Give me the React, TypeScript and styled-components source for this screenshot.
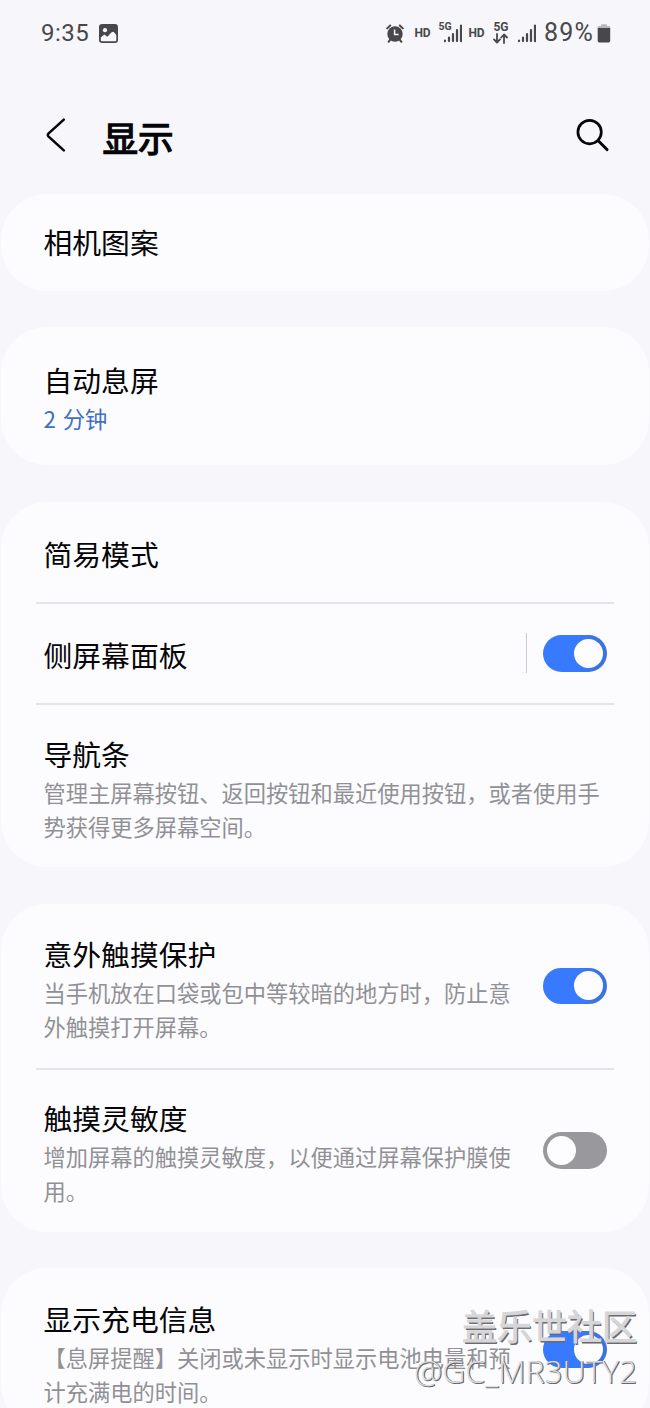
import React from 'react';
import styled, { createGlobalStyle } from 'styled-components';

const GlobalStyle = createGlobalStyle`
  * { box-sizing: border-box; }
  html, body { margin: 0; padding: 0; background: #f6f6fb; }
  body { height: 1408px; overflow: hidden; }
`;

const Screen = styled.main`
  position: relative;
  width: 650px;
  height: 1408px;
  overflow: hidden;
  background: #f6f6fb;
  color: #060608;
  font-family: Roboto, 'Noto Sans CJK SC', sans-serif;
`;

const StatusBar = styled.div`
  display: flex;
  justify-content: space-between;
  height: 66px;
  padding: 0 39px 0 41px;
  color: #48484a;
`;

const StatusGroup = styled.div`
  display: flex;
  align-items: center;
`;

const StatusText = styled.span<{ $spacing: number; $gap?: number; $size?: number }>`
  margin-left: ${(p) => p.$gap ?? 0}px;
  font-size: ${(p) => p.$size ?? 24}px;
  line-height: 28px;
  letter-spacing: ${(p) => p.$spacing}px;
`;

const StatusIcon = styled.svg<{ $gap: number }>`
  display: block;
  flex: none;
  margin-left: ${(p) => p.$gap}px;
`;

const HdLabel = styled.span<{ $gap: number }>`
  width: 17px;
  margin-left: ${(p) => p.$gap}px;
  font: 700 12px/14px Roboto, sans-serif;
  letter-spacing: -0.2px;
`;

const Header = styled.header`
  display: flex;
  align-items: center;
  height: 127.5px;
  padding: 0 41px 0 46px;
`;

const HeaderIcon = styled.svg`
  display: block;
  flex: none;
  margin-top: 11px;
`;

const PageTitle = styled.h1`
  flex: 1;
  margin: 14px 0 0 36.5px;
  font: 400 35.6px/50px 'Noto Sans CJK SC', sans-serif;
  -webkit-text-stroke: 1.3px currentColor;
`;

const CardList = styled.div`
  display: flex;
  flex-direction: column;
  gap: 36.8px;
  padding: 0 1px;
`;

const Card = styled.section`
  flex: none;
  border-radius: 46px;
  background: #fcfcff;
`;

const Row = styled.div<{ $height: number; $top?: number }>`
  display: flex;
  height: ${(p) => p.$height}px;
  padding: ${(p) => p.$top ?? 0}px 42.5px 0 42.5px;
  align-items: ${(p) => (p.$top === undefined ? 'center' : 'flex-start')};
`;

const Divider = styled.div`
  height: 2px;
  margin: 0 35px;
  background: #e4e4e8;
`;

const RowText = styled.div`
  flex: 1;
  min-width: 0;
`;

const RowTitle = styled.div`
  font: 400 28.8px/40px 'Noto Sans CJK SC', sans-serif;
  white-space: nowrap;
`;

const RowNote = styled.div<{ $accent?: boolean }>`
  margin-top: 1px;
  color: ${(p) => (p.$accent ? '#4170bd' : '#919195')};
  font: 400 22.25px/34.4px 'Noto Sans CJK SC', sans-serif;
  word-spacing: ${(p) => (p.$accent ? 2 : 0)}px;
  white-space: nowrap;
`;

const ToggleSlot = styled.div`
  display: flex;
  align-items: center;
  align-self: stretch;
  flex: none;
`;

const ToggleRule = styled.div`
  width: 1.5px;
  height: 40px;
  margin-right: 16px;
  background: #cbcbcf;
`;

const Toggle = styled.div<{ $on: boolean }>`
  display: flex;
  align-items: center;
  justify-content: ${(p) => (p.$on ? 'flex-end' : 'flex-start')};
  width: 63.5px;
  height: 36.5px;
  padding: 0 3.7px;
  border-radius: 19px;
  background: ${(p) => (p.$on ? 'linear-gradient(90deg, #387aff 55%, #3b73df 90%)' : '#98989d')};
`;

const Knob = styled.div`
  width: 29px;
  height: 29px;
  border-radius: 50%;
  background: #fdfdff;
`;

const Watermark = styled.div`
  position: absolute;
  right: 13px;
  bottom: 15px;
  display: flex;
  flex-direction: column;
  align-items: flex-end;
  white-space: nowrap;
`;

const WatermarkName = styled.div`
  color: #d6d6d8;
  font: 400 35px/48px 'Noto Sans CJK SC', sans-serif;
  -webkit-text-stroke: 1px #d6d6d8;
  text-shadow: 1.5px 1.5px 0 #6b6b6f;
`;

const WatermarkUser = styled.div`
  color: #dededf;
  font: 300 31.8px/44px 'Open Sans', 'Noto Sans', sans-serif;
  text-shadow: 1px 1px 0 #68686b, 1px 0 0 #7d7d80;
`;

function PictureIcon() {
  return (
    <StatusIcon $gap={9.5} width="19" height="19" viewBox="0 0 19 19">
      <rect width="19" height="19" rx="3.2" fill="currentColor" />
      <circle cx="6" cy="6.2" r="2.1" fill="#f6f6fb" />
      <path d="M1.8 13.6 5.3 10.5 8.3 12.8 12.7 8.2Q14 7.2 15.2 8.5L17.3 11V16.1Q17.3 17.3 16.1 17.3H3Q1.8 17.3 1.8 16.1Z" fill="#f6f6fb" />
    </StatusIcon>
  );
}

function AlarmIcon() {
  return (
    <StatusIcon $gap={0} width="18" height="19" viewBox="0 0 18 19">
      <circle cx="9" cy="10" r="7.7" fill="currentColor" />
      <path d="M1.2 4.4 4.2 1.5M16.8 4.4 13.8 1.5M4.3 15.6 2.6 17.8M13.7 15.6 15.4 17.8" stroke="currentColor" strokeWidth="2" strokeLinecap="round" />
      <path d="M8.6 5.6V10.4H12.6" fill="none" stroke="#f6f6fb" strokeWidth="1.5" />
    </StatusIcon>
  );
}

function SignalBars() {
  return (
    <path d="M1 16.5V17.1M5 13.6V17.1M9 10.1V17.1M13 6V17.1M17 1.6V17.1" stroke="currentColor" strokeWidth="2.2" strokeLinecap="round" />
  );
}

const NetworkMark = styled.span`
  width: 15px;
  margin: 0 -9px 12px 7px;
  font: 700 10.5px/12px Roboto, sans-serif;
`;

const NetworkStack = styled.div`
  display: flex;
  flex-direction: column;
  align-items: center;
  width: 17px;
  margin-left: 7px;
  font: 700 12px/11px Roboto, sans-serif;
`;

function Switch({ on }: { on: boolean }) {
  return (
    <Toggle $on={on}>
      <Knob />
    </Toggle>
  );
}

type DetailRowProps = {
  title: string;
  lines: string[];
  height: number;
  top?: number;
  on?: boolean;
};

const DetailSlot = styled(ToggleSlot)<{ $lift: number }>`
  margin-top: -${(p) => p.$lift}px;
`;

function DetailRow({ title, lines, height, top = 28.5, on }: DetailRowProps) {
  return (
    <Row $height={height} $top={top}>
      <RowText>
        <RowTitle>{title}</RowTitle>
        <RowNote>
          {lines.map((line) => (
            <div key={line}>{line}</div>
          ))}
        </RowNote>
      </RowText>
      {on !== undefined && (
        <DetailSlot $lift={top}>
          <Switch on={on} />
        </DetailSlot>
      )}
    </Row>
  );
}

export default function App() {
  return (
    <Screen>
      <GlobalStyle />
      <StatusBar>
        <StatusGroup>
          <StatusText $spacing={0.5}>9:35</StatusText>
          <PictureIcon />
        </StatusGroup>
        <StatusGroup>
          <AlarmIcon />
          <HdLabel $gap={10}>HD</HdLabel>
          <NetworkMark>5G</NetworkMark>
          <StatusIcon $gap={0} width="18" height="19" viewBox="0 0 18 19">
            <SignalBars />
          </StatusIcon>
          <HdLabel $gap={6}>HD</HdLabel>
          <NetworkStack>
            5G
            <svg width="15" height="11" viewBox="0 0 15 11" fill="none" stroke="currentColor" strokeWidth="1.8" strokeLinecap="round" strokeLinejoin="round">
              <path d="M4 1V9M1 6.4 4 9.5 7 6.4M11 10V2M8.2 4.5 11 1.5 14 4.5" />
            </svg>
          </NetworkStack>
          <StatusIcon $gap={9} width="18" height="19" viewBox="0 0 18 19">
            <SignalBars />
          </StatusIcon>
          <StatusText $gap={7.5} $spacing={1.2} $size={25}>89%</StatusText>
          <StatusIcon $gap={3} width="14" height="19" viewBox="0 0 14 19">
            <path d="M4 3V1.3Q4 .3 5 .3H9Q10 .3 10 1.3V2H12Q13.2 2 13.2 3.4V5H.7V3.4Q.7 2 2 2H4Z" fill="#b9b9bd" />
            <path d="M.7 4H13.2V16.7Q13.2 18.4 11.5 18.4H2.4Q.7 18.4.7 16.7Z" fill="currentColor" />
          </StatusIcon>
        </StatusGroup>
      </StatusBar>

      <Header>
        <HeaderIcon width="20" height="34" viewBox="0 0 20 34">
          <path d="M17.8 1.6 2.4 15.6Q1.2 17 2.4 18.3L17.8 32.4" fill="none" stroke="#060608" strokeWidth="2.5" strokeLinecap="round" />
        </HeaderIcon>
        <PageTitle>显示</PageTitle>
        <HeaderIcon width="33" height="34" viewBox="0 0 33 34">
          <circle cx="13.6" cy="14.1" r="11.7" fill="none" stroke="#060608" strokeWidth="2.7" />
          <path d="M22 22.5 31 31.6" stroke="#060608" strokeWidth="2.9" strokeLinecap="round" />
        </HeaderIcon>
      </Header>

      <CardList>
        <Card>
          <Row $height={97}>
            <RowTitle>相机图案</RowTitle>
          </Row>
        </Card>

        <Card>
          <Row $height={137.5} $top={33}>
            <RowText>
              <RowTitle>自动息屏</RowTitle>
              <RowNote $accent>2 分钟</RowNote>
            </RowText>
          </Row>
        </Card>

        <Card>
          <Row $height={100.4} $top={32}>
            <RowTitle>简易模式</RowTitle>
          </Row>
          <Divider />
          <Row $height={99} $top={31}>
            <RowText>
              <RowTitle>侧屏幕面板</RowTitle>
            </RowText>
            <DetailSlot $lift={31}>
              <ToggleRule />
              <Switch on />
            </DetailSlot>
          </Row>
          <Divider />
          <DetailRow
            title="导航条"
            height={162.3}
            top={28.6}
            lines={['管理主屏幕按钮、返回按钮和最近使用按钮，或者使用手', '势获得更多屏幕空间。']}
          />
        </Card>

        <Card>
          <DetailRow
            title="意外触摸保护"
            height={163.5}
            top={29.5}
            lines={['当手机放在口袋或包中等较暗的地方时，防止意', '外触摸打开屏幕。']}
            on
          />
          <Divider />
          <DetailRow
            title="触摸灵敏度"
            height={162}
            top={28}
            lines={['增加屏幕的触摸灵敏度，以便通过屏幕保护膜使', '用。']}
            on={false}
          />
        </Card>

        <Card>
          <DetailRow
            title="显示充电信息"
            height={162}
            top={30.2}
            lines={['【息屏提醒】关闭或未显示时显示电池电量和预', '计充满电的时间。']}
            on
          />
        </Card>
      </CardList>

      <Watermark>
        <WatermarkName>盖乐世社区</WatermarkName>
        <WatermarkUser>@GC_MR3UTY2</WatermarkUser>
      </Watermark>
    </Screen>
  );
}
